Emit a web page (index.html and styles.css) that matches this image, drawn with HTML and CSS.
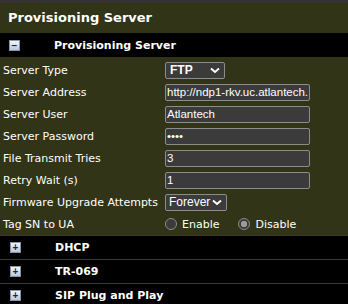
FILE: index.html
```html
<!DOCTYPE html>
<html lang="en">
<head>
    <meta charset="utf-8">
    <title>Provisioning Server</title>
    <link rel="stylesheet" href="styles.css">
</head>
<body>
    <div class="topline"></div>
    <h1 class="title">Provisioning Server</h1>

    <div class="section">
        <div class="section-head">
            <span class="toggle">&minus;</span>
            <span class="section-name">Provisioning Server</span>
        </div>
        <div class="section-body">
            <div class="row">
                <label>Server Type</label>
                <select class="sel sel-type"><option>FTP</option><option>TFTP</option><option>HTTP</option></select>
            </div>
            <div class="row">
                <label>Server Address</label>
                <input type="text" class="field" value="http://ndp1-rkv.uc.atlantech.net">
            </div>
            <div class="row">
                <label>Server User</label>
                <input type="text" class="field" value="Atlantech">
            </div>
            <div class="row">
                <label>Server Password</label>
                <input type="password" class="field" value="abcd">
            </div>
            <div class="row">
                <label>File Transmit Tries</label>
                <input type="text" class="field" value="3">
            </div>
            <div class="row">
                <label>Retry Wait (s)</label>
                <input type="text" class="field" value="1">
            </div>
            <div class="row">
                <label>Firmware Upgrade Attempts</label>
                <select class="sel sel-fw"><option>Forever</option><option>1</option></select>
            </div>
            <div class="row">
                <label>Tag SN to UA</label>
                <div class="radios">
                    <span class="radio"></span><span class="radio-label">Enable</span>
                    <span class="radio checked"></span><span class="radio-label">Disable</span>
                </div>
            </div>
        </div>
    </div>

    <div class="section-head collapsed">
        <span class="toggle">+</span>
        <span class="section-name">DHCP</span>
    </div>
    <div class="section-head collapsed">
        <span class="toggle">+</span>
        <span class="section-name">TR-069</span>
    </div>
    <div class="section-head collapsed">
        <span class="toggle">+</span>
        <span class="section-name">SIP Plug and Play</span>
    </div>
</body>
</html>
```

FILE: styles.css
```css
body {
    margin: 0;
    background-color: #313417;
    color: #ffffff;
    font-family: "DejaVu Sans", Verdana, sans-serif;
}

.topline {
    height: 3px;
    background-color: #343434;
}

.title {
    margin: 0;
    height: 30px;
    line-height: 29px;
    padding-left: 8px;
    font-size: 13px;
    font-weight: bold;
}

.section-head {
    display: flex;
    align-items: center;
    height: 24px;
    background-color: #000000;
}

.section-head.collapsed {
    border-top: 1px solid #3a3d1c;
    height: 23px;
}

.toggle {
    width: 9px;
    height: 9px;
    margin-left: 9px;
    border: 1px solid #8a94a6;
    background: linear-gradient(#f4f7fb, #b9c6dc);
    color: #1a2a4a;
    font-size: 10px;
    font-weight: bold;
    line-height: 9px;
    text-align: center;
    font-family: "Liberation Sans", Arial, sans-serif;
}

.section-head.collapsed .toggle {
    margin-left: 10px;
}

.section-name {
    margin-left: 34px;
    font-size: 11px;
    font-weight: bold;
}

.section-body {
    padding-top: 2px;
}

.row {
    display: flex;
    align-items: center;
    height: 22px;
}

.row label {
    width: 162px;
    padding-left: 3px;
    font-size: 11px;
}

.field, .sel {
    background-color: #3b3b3b;
    color: #ffffff;
    border: 1px solid #8c8c8c;
    border-radius: 2px;
    font-family: "Liberation Sans", Arial, sans-serif;
    font-size: 11.5px;
}

.field {
    width: 145px;
    height: 17px;
    padding: 0 1px;
    box-sizing: border-box;
}

.sel {
    appearance: none;
    height: 17px;
    padding: 0 0 0 4px;
    box-sizing: border-box;
    background-image: url("data:image/svg+xml,%3Csvg xmlns='http://www.w3.org/2000/svg' width='10' height='7'%3E%3Cpath d='M1 1.5 L5 5 L9 1.5' fill='none' stroke='white' stroke-width='2'/%3E%3C/svg%3E");
    background-repeat: no-repeat;
    background-position: right 4px center;
}

.sel-type {
    width: 60px;
    font-size: 12px;
    font-weight: bold;
}

.sel-fw {
    width: 62px;
    padding-left: 3px;
    font-size: 12px;
}

.radios {
    display: flex;
    align-items: center;
    font-size: 11px;
}

.radio {
    width: 12px;
    height: 12px;
    border: 1px solid #8a8a8a;
    border-radius: 50%;
    background-color: #3b3b3b;
    box-sizing: border-box;
}

.radio.checked {
    background: radial-gradient(circle, #9a9a9a 0 3px, #3b3b3b 3.5px);
}

.radio-label {
    margin-left: 5px;
    margin-right: 19px;
}
```
